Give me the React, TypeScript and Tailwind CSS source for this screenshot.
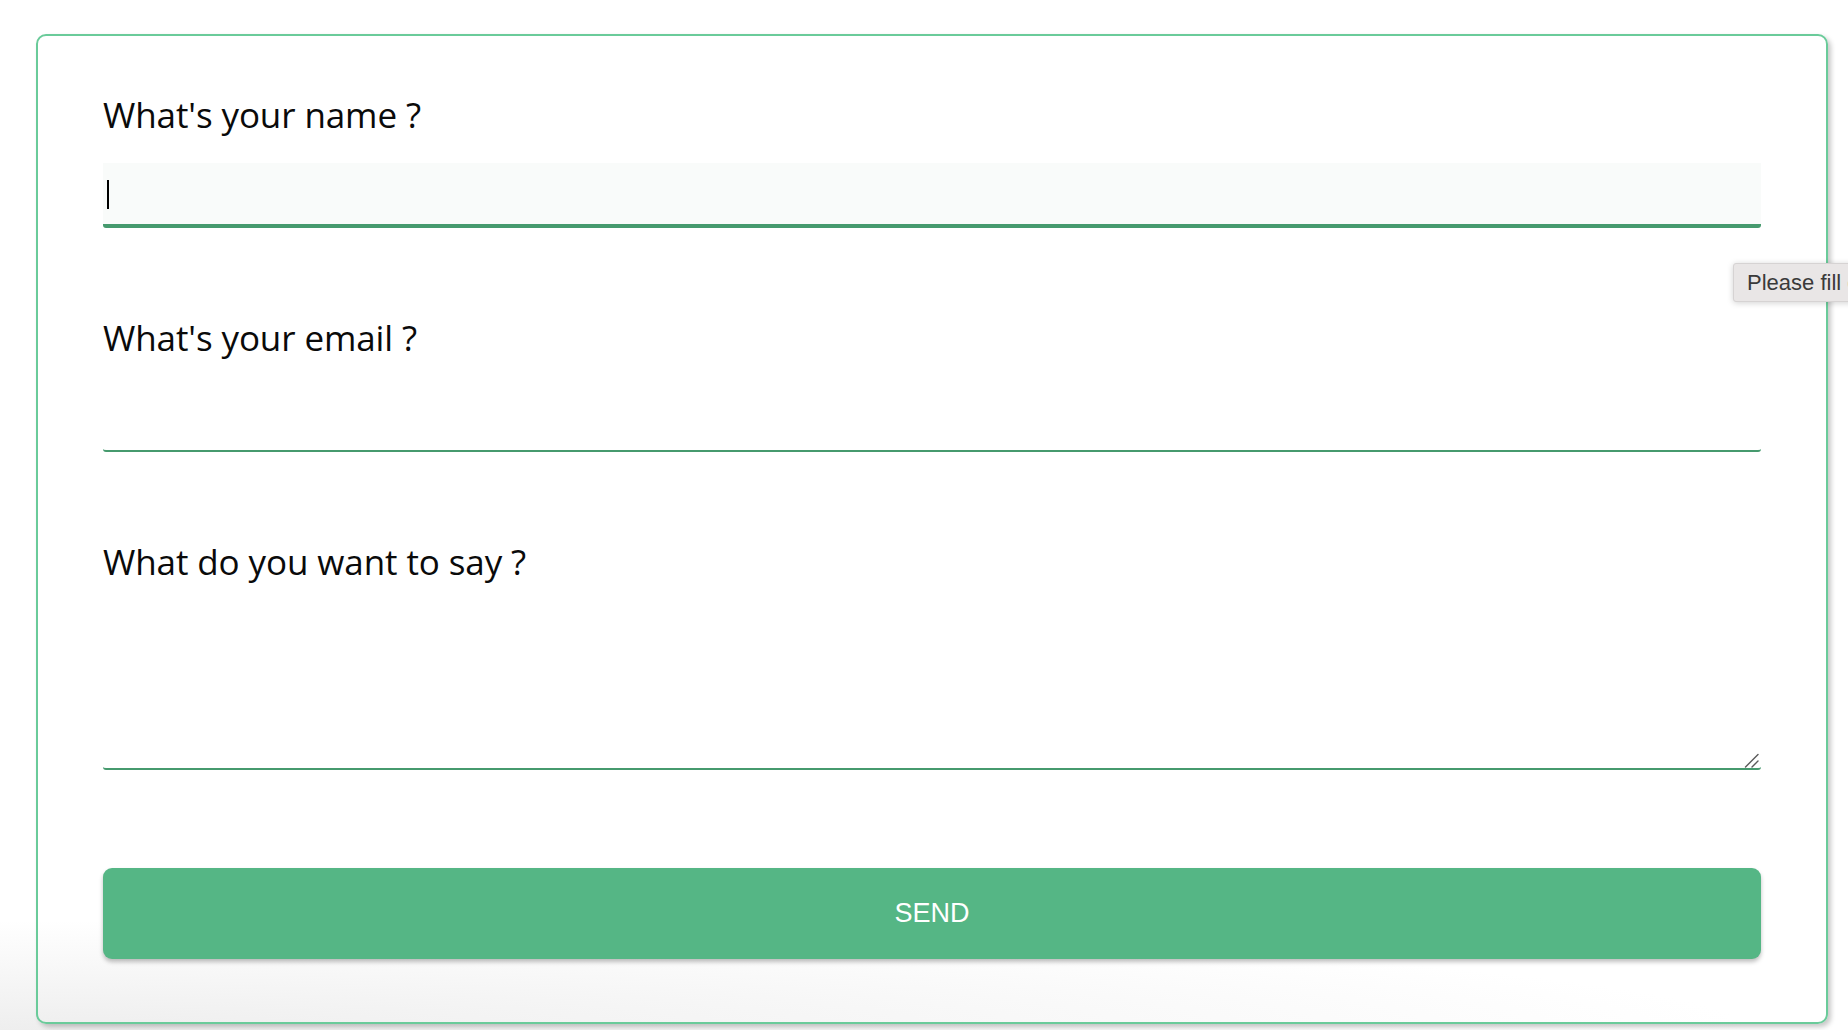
import React from "react";

export default function App() {
  const label =
    "block h-[40px] leading-[40px] text-[35px] text-[#0a0a0a] font-['Open_Sans',sans-serif] tracking-[-0.1px]";
  return (
    <div className="relative w-[1848px] h-[1030px] overflow-hidden bg-[radial-gradient(1750px_110px_at_0%_100%,#eeeeee,#ffffff)]">
      <div className="pt-[34px] pl-[36px]">
        <form
          className="w-[1792px] h-[990px] border-2 border-[#6acb9a] rounded-[10px] shadow-[3px_3px_5px_rgba(0,0,0,0.22)] px-[65px] pt-[59px] pb-[63px] flex flex-col"
          onSubmit={(e) => e.preventDefault()}
        >
          <label className={label}>What's your name ?</label>
          <div className="relative mt-[28px] h-[65px] bg-[#f9fbfa] border-b-4 border-[#469a6e] rounded-b-[3px]">
            <input
              className="w-full h-full bg-transparent outline-none px-[4px] text-[28px]"
              aria-label="name"
            />
            <div className="absolute left-[4px] top-[17px] w-[2px] h-[29px] bg-black" />
          </div>

          <label className={label + " mt-[90px]"}>What's your email ?</label>
          <div className="mt-[29px] h-[65px] border-b-2 border-[#469a6e] rounded-b-[3px]">
            <input
              className="w-full h-full bg-transparent outline-none px-[4px] text-[28px]"
              aria-label="email"
            />
          </div>

          <label className={label + " mt-[90px]"}>What do you want to say ?</label>
          <div className="relative mt-[29px] h-[159px]">
            <textarea
              className="block h-full w-full resize-none bg-transparent border-b-2 border-[#469a6e] rounded-b-[3px] outline-none px-[4px] text-[28px]"
              aria-label="message"
            />
            <svg
              className="absolute right-[2px] bottom-[2px]"
              width="15"
              height="15"
              viewBox="0 0 15 15"
            >
              <path d="M1.5 14 L14 1.5" stroke="#5a5a5a" strokeWidth="1.4" strokeLinecap="round" />
              <path d="M8 14 L14 8" stroke="#5a5a5a" strokeWidth="1.4" strokeLinecap="round" />
            </svg>
          </div>

          <button
            type="submit"
            className="mt-[98px] h-[91px] w-full rounded-[9px] bg-[#55b685] text-white text-[27px] font-['Liberation_Sans',Arial,sans-serif] shadow-[0_3px_4px_rgba(0,0,0,0.25)]"
          >
            SEND
          </button>
        </form>
      </div>

      <div className="absolute left-[1733px] top-[263px] h-[39px] pl-[13px] pr-[14px] flex items-center whitespace-nowrap bg-[#e9e6e6] border border-[#d6d3d3] rounded-[3px] shadow-[0_1px_6px_rgba(0,0,0,0.18)] text-[22px] text-[#3a3a3a] font-['Liberation_Sans',Arial,sans-serif]">
        Please fill out this field.
      </div>
    </div>
  );
}
